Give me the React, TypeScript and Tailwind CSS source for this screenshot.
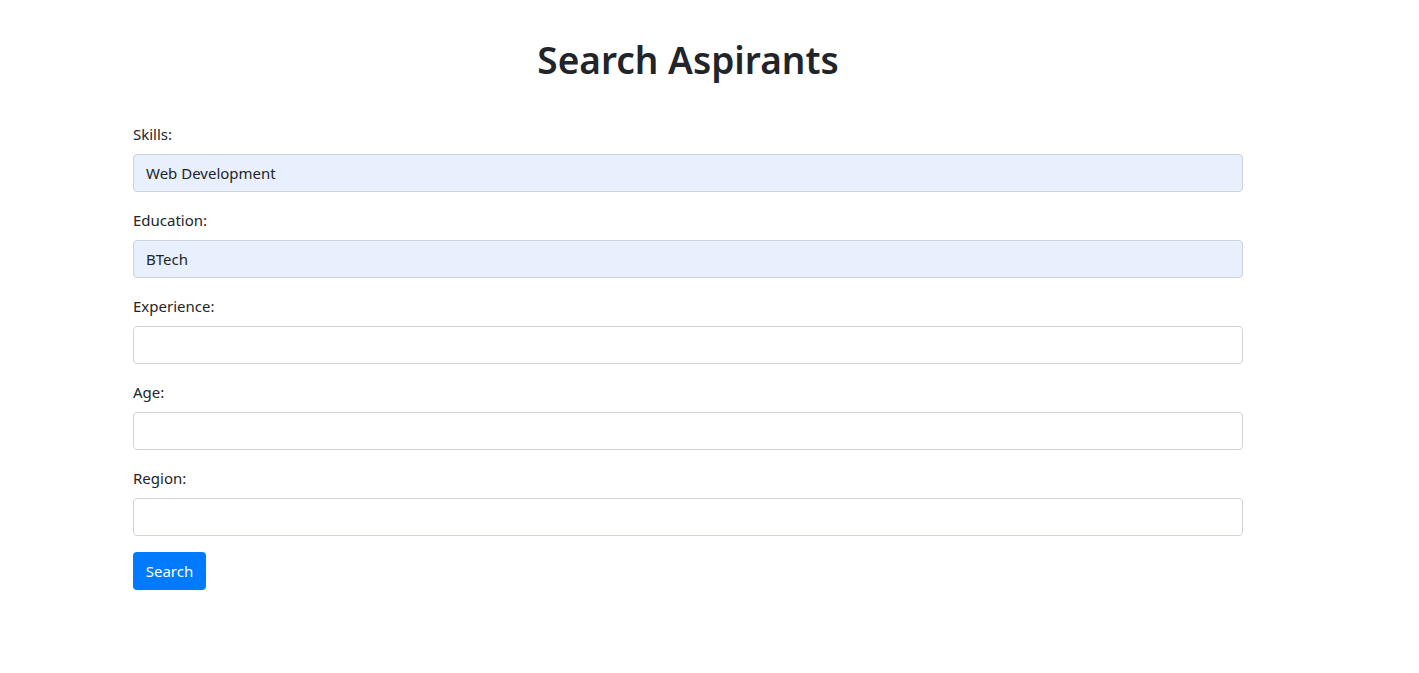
import { useState } from 'react';

const fields = [
  { name: 'skills', label: 'Skills:', value: 'Web Development' },
  { name: 'education', label: 'Education:', value: 'BTech' },
  { name: 'experience', label: 'Experience:', value: '' },
  { name: 'age', label: 'Age:', value: '' },
  { name: 'region', label: 'Region:', value: '' },
];

export default function App() {
  const [values, setValues] = useState<Record<string, string>>(
    Object.fromEntries(fields.map((f) => [f.name, f.value]))
  );

  return (
    <div
      className="min-h-[673px] bg-white text-[#212529]"
      style={{ fontFamily: '"Noto Sans", "Open Sans", sans-serif' }}
    >
      <div className="ml-[133px] w-[1110px] pt-[36px]">
        <h1 className="text-center text-[37px] font-semibold leading-[48px] mb-[38px]">Search Aspirants</h1>

        <form onSubmit={(e) => e.preventDefault()}>
          {fields.map((f) => (
            <div key={f.name} className="mb-4">
              <label htmlFor={f.name} className="block text-[15px] leading-6 mb-2">
                {f.label}
              </label>
              <input
                id={f.name}
                type="text"
                value={values[f.name]}
                onChange={(e) => setValues({ ...values, [f.name]: e.target.value })}
                className={`block w-full h-[38px] px-3 text-[15px] rounded border border-[#ced4da] outline-none ${
                  values[f.name] ? 'bg-[#e8f0fe]' : 'bg-white'
                }`}
              />
            </div>
          ))}
          <button
            type="submit"
            className="h-[38px] w-[73px] rounded bg-[#007bff] text-white text-[15px] leading-6"
          >
            Search
          </button>
        </form>
      </div>
    </div>
  );
}
